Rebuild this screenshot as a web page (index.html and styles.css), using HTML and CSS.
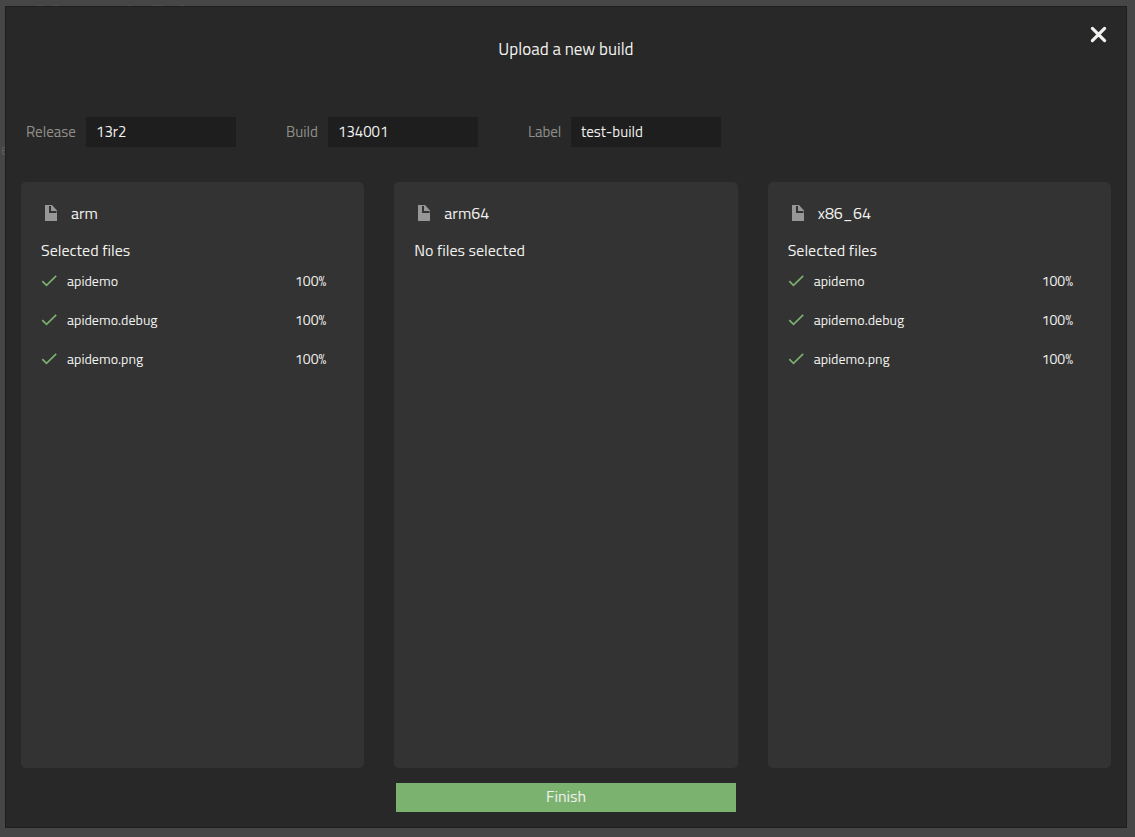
FILE: index.html
```
<!DOCTYPE html>
<html lang="en">
<head>
<meta charset="utf-8">
<title>Upload a new build</title>
<link rel="stylesheet" href="styles.css">
</head>
<body>
<svg width="0" height="0" class="sprite">
  <symbol id="file" viewBox="0 0 12 16"><path fill="#979797" fill-rule="evenodd" d="M0 0H7L12 5.5V16H0ZM4 1V8H11.5V6H6V1Z"/></symbol>
  <symbol id="check" viewBox="0 0 16 12"><path fill="none" stroke="#7bb06f" stroke-width="1.7" d="M1.3 6.2L5.5 10.4L15.2 .9"/></symbol>
</svg>
<div class="backdrop"><span class="behind">e</span></div>
<main class="modal">
  <header class="header">
    <h1 class="title">Upload a new build</h1>
    <button class="close" aria-label="Close"><svg width="17" height="17" viewBox="0 0 17 17"><path d="M2.4 2.4L14.6 14.6M14.6 2.4L2.4 14.6" stroke="#f1f1ef" stroke-width="3.2" stroke-linecap="round"/></svg></button>
  </header>
  <section class="fields">
    <div class="field"><span class="label release">Release</span><span class="input">13r2</span></div>
    <div class="field"><span class="label build">Build</span><span class="input">134001</span></div>
    <div class="field"><span class="label tag">Label</span><span class="input">test-build</span></div>
  </section>
  <section class="panels">
    <article class="panel">
      <h2 class="arch"><svg class="file"><use href="#file"/></svg><span>arm</span></h2>
      <p class="status">Selected files</p>
      <ul class="files">
        <li class="row"><svg class="check"><use href="#check"/></svg><span class="name">apidemo</span><span class="percent">100%</span></li>
        <li class="row"><svg class="check"><use href="#check"/></svg><span class="name">apidemo.debug</span><span class="percent">100%</span></li>
        <li class="row"><svg class="check"><use href="#check"/></svg><span class="name">apidemo.png</span><span class="percent">100%</span></li>
      </ul>
    </article>
    <article class="panel">
      <h2 class="arch"><svg class="file"><use href="#file"/></svg><span>arm64</span></h2>
      <p class="status">No files selected</p>
    </article>
    <article class="panel">
      <h2 class="arch"><svg class="file"><use href="#file"/></svg><span>x86_64</span></h2>
      <p class="status">Selected files</p>
      <ul class="files">
        <li class="row"><svg class="check"><use href="#check"/></svg><span class="name">apidemo</span><span class="percent">100%</span></li>
        <li class="row"><svg class="check"><use href="#check"/></svg><span class="name">apidemo.debug</span><span class="percent">100%</span></li>
        <li class="row"><svg class="check"><use href="#check"/></svg><span class="name">apidemo.png</span><span class="percent">100%</span></li>
      </ul>
    </article>
  </section>
  <button class="finish">Finish</button>
</main>
</body>
</html>
```
FILE: styles.css
```
* { box-sizing: border-box; margin: 0; padding: 0; }
body { height: 837px; padding: 6px 8px 9px 5px; overflow: hidden; background: #464646; color: #f1f1ef; font: 16px/24px "Titillium Web", Roboto, sans-serif; }
.sprite { position: absolute; }
.backdrop { position: absolute; inset: 0; overflow: hidden; background: linear-gradient(90deg, transparent 37px, #505050 37px 43px, transparent 43px 53px, #505050 53px 58px, transparent 58px 128px, #505050 128px 131px, transparent 131px 153px, #505050 153px 163px, transparent 163px 179px, #505050 179px 184px, transparent 184px) 0 5px / 100% 1px no-repeat; }
.behind { position: absolute; left: 1px; top: 138px; color: #5c5c5c; font-size: 15px; }
button { border: 0; font: inherit; color: inherit; background: none; }
.modal { position: relative; height: 822px; border: 1px solid #1e1e1e; background: #282828; padding: 0 15px 15px; display: flex; flex-direction: column; }
.header { height: 110px; display: grid; grid-template-columns: 1fr auto 1fr; align-items: start; }
.title { grid-column: 2; padding-top: 30px; font-size: 17px; font-weight: 400; white-space: nowrap; }
.close { justify-self: end; width: 17px; height: 17px; margin: 19px 4px 0 0; }
.close svg { display: block; }
.fields { height: 65px; display: flex; align-items: flex-start; gap: 50px; padding-left: 5px; }
.field { display: flex; gap: 10px; line-height: 30px; }
.label { color: #8f8f8a; font-size: 15px; white-space: nowrap; }
.release { width: 50px; }
.build { width: 32px; }
.tag { width: 33px; letter-spacing: -.1px; }
.input { width: 150px; height: 30px; padding-left: 10px; background: #1e1e1e; font-size: 15px; }
.panels { height: 586px; display: grid; grid-template-columns: repeat(3, 1fr); gap: 30px; }
.panel { border-radius: 5px; background: #333; padding: 19px 38px 0 20px; }
.arch { display: flex; align-items: center; gap: 14px; height: 24px; padding-left: 4px; font-size: 16px; font-weight: 400; }
.file { width: 12px; height: 16px; }
.status { margin-top: 13px; font-size: 16px; line-height: 24px; }
.files { list-style: none; margin-top: 4px; }
.row { display: flex; align-items: center; height: 29px; margin-bottom: 10px; font-size: 14px; }
.check { width: 16px; height: 12px; margin-right: 10px; }
.percent { margin-left: auto; }
.finish { width: 340px; height: 29px; margin: 15px auto 0; padding-bottom: 2px; background: #7cb270; font-size: 16px; line-height: 27px; }
```
